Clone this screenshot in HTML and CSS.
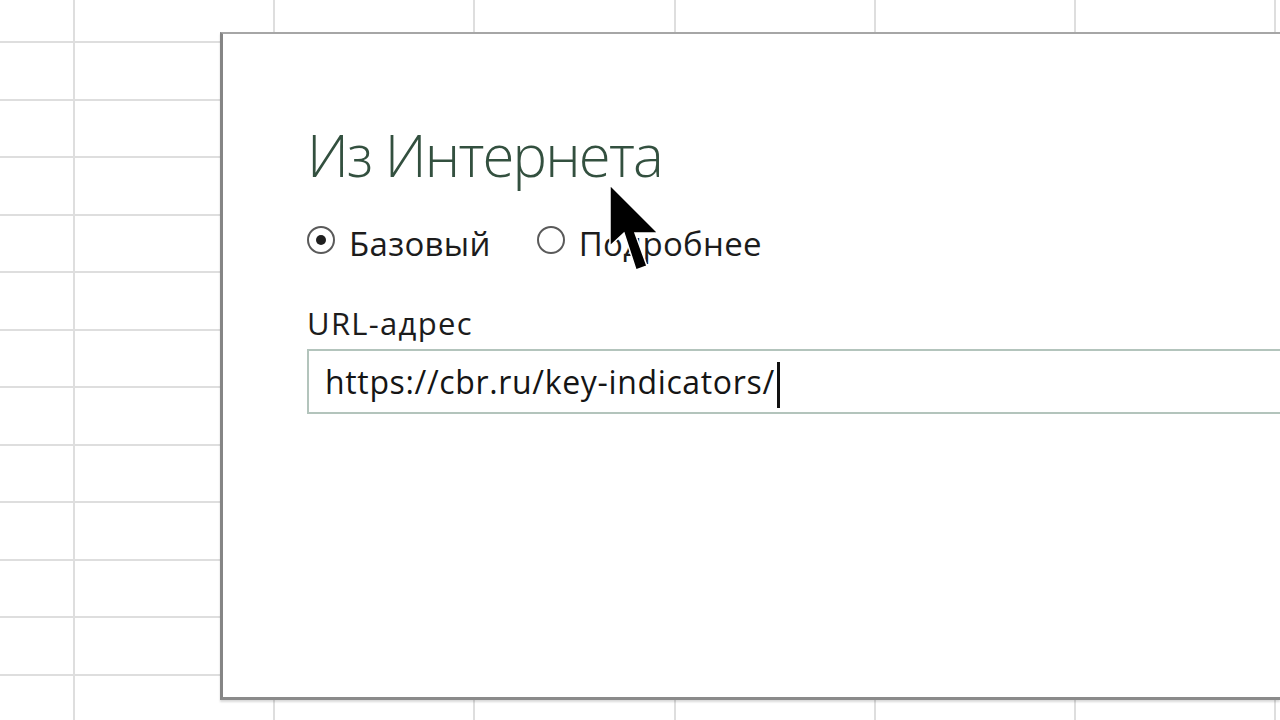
FILE: index.html
```html
<!DOCTYPE html>
<html lang="ru">
<head>
<meta charset="utf-8">
<title>Из Интернета</title>
<link rel="stylesheet" href="styles.css">
</head>
<body>
<div class="sheet">
  <div class="dialog">
    <h1 class="title">Из Интернета</h1>
    <div class="radios">
      <label class="radio">
        <span class="circle checked"></span>
        <span class="radio-text">Базовый</span>
      </label>
      <label class="radio second">
        <span class="circle"></span>
        <span class="radio-text">Подробнее</span>
      </label>
    </div>
    <div class="field-label">URL-адрес</div>
    <div class="input">https://cbr.ru/key-indicators/<span class="caret"></span></div>
  </div>
  <svg class="pointer" width="54" height="94" viewBox="0 0 54 94">
    <polygon points="1,1 1,62 15,49 27,86 38,82 26,49 49,49" fill="#000" stroke="#fff" stroke-width="1.5" stroke-linejoin="miter"/>
  </svg>
</div>
</body>
</html>
```

FILE: styles.css
```css
html, body {
  margin: 0;
  padding: 0;
}
body {
  width: 1280px;
  height: 720px;
  overflow: hidden;
  background-color: #ffffff;
  background-image:
    repeating-linear-gradient(90deg, transparent 0, transparent 73px, #dedede 73px, #dedede 75px, transparent 75px, transparent 200.2px),
    repeating-linear-gradient(180deg, transparent 0, transparent 41px, #dedede 41px, #dedede 43px, transparent 43px, transparent 57.5px);
  font-family: "Open Sans", "Noto Sans", "DejaVu Sans", sans-serif;
}
.sheet {
  position: relative;
  width: 1280px;
  height: 720px;
  overflow: hidden;
}
.dialog {
  box-sizing: border-box;
  margin: 0 0 0 220px;
  position: relative;
  top: 32px;
  width: 1060px;
  height: 668px;
  background: #ffffff;
  border-left: 3px solid #858585;
  border-top: 2px solid #a6a6a6;
  border-bottom: 3px solid #8a8a8a;
  box-shadow: 0 2px 2px rgba(0,0,0,0.15);
  padding: 0 0 0 84px;
  display: flex;
  flex-direction: column;
  align-items: flex-start;
  overflow: hidden;
}
.title {
  margin: 92px 0 0 0;
  font-size: 58px;
  line-height: 58px;
  height: 58px;
  font-weight: 300;
  color: #33503f;
  letter-spacing: -1.8px;
}
.radios {
  margin-top: 40px;
  height: 40px;
  display: flex;
  align-items: flex-start;
}
.radio {
  display: flex;
  align-items: flex-start;
}
.second {
  margin-left: 46px;
}
.circle {
  box-sizing: border-box;
  width: 28px;
  height: 28px;
  border-radius: 50%;
  border: 2.5px solid #5a5a5a;
  margin-top: 2px;
  margin-right: 14px;
  position: relative;
}
.circle.checked::after {
  content: "";
  position: absolute;
  left: 6.5px;
  top: 6.5px;
  width: 10px;
  height: 10px;
  border-radius: 50%;
  background: #1f1f1f;
}
.radio-text {
  font-size: 33px;
  line-height: 40px;
  color: #1c1c1c;
  letter-spacing: 0.3px;
}
.field-label {
  margin-top: 42px;
  font-size: 31px;
  line-height: 34px;
  height: 34px;
  color: #1c1c1c;
  letter-spacing: 1.3px;
}
.input {
  box-sizing: border-box;
  margin-top: 9px;
  width: 1000px;
  height: 65px;
  border: 2px solid #b3c4bc;
  border-right: none;
  padding-left: 16px;
  font-size: 32px;
  line-height: 61px;
  color: #151515;
  white-space: nowrap;
  letter-spacing: 0.65px;
}
.caret {
  display: inline-block;
  width: 3px;
  height: 46px;
  background: #111;
  margin-left: 2px;
  vertical-align: -14px;
}
.pointer {
  position: absolute;
  left: 609px;
  top: 184px;
}
```
